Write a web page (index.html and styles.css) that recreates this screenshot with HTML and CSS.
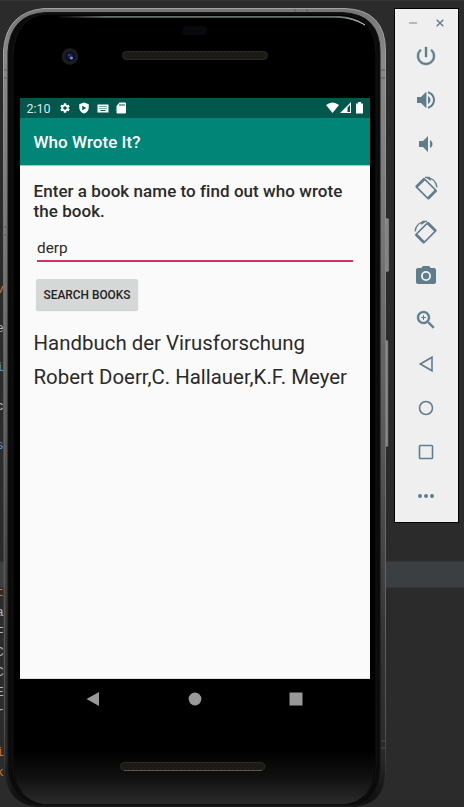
FILE: index.html
```html
<!DOCTYPE html>
<html lang="en">
<head>
<meta charset="utf-8">
<title>Who Wrote It?</title>
<link rel="stylesheet" href="styles.css">
</head>
<body>
<div class="desktop">
  <div class="band"></div>
  <pre class="code code-top"><b>v</b>
e
<i>i</i>
c
<i>s</i></pre>
  <pre class="code code-bottom"><b>t</b>
a
F
C
C
E
r

<b>i</b>
<b>k</b></pre>
  <main class="phone">
    <svg class="shell" width="388" height="807" viewBox="4 0 388 807">
      <defs>
        <linearGradient id="rim" x1="0" y1="0" x2="0" y2="1">
          <stop offset="0" stop-color="#777"/><stop offset=".06" stop-color="#888"/><stop offset=".3" stop-color="#747474"/>
          <stop offset=".56" stop-color="#565656"/><stop offset=".8" stop-color="#333"/><stop offset=".94" stop-color="#282828"/><stop offset="1" stop-color="#0c0c0c"/>
        </linearGradient>
        <linearGradient id="edge" x1="0" y1="0" x2="0" y2="1">
          <stop offset="0" stop-color="#a4a4a4"/><stop offset=".5" stop-color="#777"/><stop offset=".9" stop-color="#555"/><stop offset="1" stop-color="#181818"/>
        </linearGradient>
        <linearGradient id="key"><stop offset="0" stop-color="#555"/><stop offset=".55" stop-color="#8b8b8b"/><stop offset="1" stop-color="#666"/></linearGradient>
        <linearGradient id="chin" x1="0" y1="0" x2="0" y2="1">
          <stop offset="0" stop-color="#000"/><stop offset=".5" stop-color="#101010"/><stop offset="1" stop-color="#2b2b2b"/>
        </linearGradient>
        <linearGradient id="shine"><stop offset="0" stop-color="#000"/><stop offset=".16" stop-color="#69716e"/><stop offset=".9" stop-color="#69716e"/><stop offset="1" stop-color="#bac4c0"/></linearGradient>
        <pattern id="mesh" width="4" height="4" patternUnits="userSpaceOnUse"><rect width="4" height="4" fill="#191814"/><circle cx="1" cy="1" r=".8" fill="#24221e"/><circle cx="3" cy="3" r=".8" fill="#24221e"/></pattern>
      </defs>
      <rect x="384" y="218" width="5.500" height="54" rx="1.500" fill="url(#key)" stroke="#181818" stroke-width=".5"/>
      <rect x="384" y="340" width="4.700" height="107" rx="1.500" fill="url(#key)" stroke="#181818" stroke-width=".5"/>
      <path d="M44 8.500H345Q385.500 10 385.500 51V774Q384 806 351 806.500H37Q7 804 4.500 772L3.500 51Q6 12 44 8.500Z" fill="url(#rim)" stroke="url(#edge)"/>
      <path d="M46 12.500H342Q380 14 380 52V770Q378 805 349 805.500H40Q11 801 8 770V52Q10 14 46 12.500Z" fill="#0b0b0b" stroke="#151515"/>
      <path d="M48 14H340Q376 16 376 54V766Q374 801 344 804H44Q16 800 13 766V54Q16 15 48 14Z" fill="#000" stroke="#141414"/>
      <path d="M14 750H375V766Q373 801 344 804H44Q16 800 14 766Z" fill="url(#chin)"/>
      <path d="M56 16.500H338Q354 17 365 25Q353 18 338 17.300H56Z" fill="url(#shine)" stroke="url(#shine)" stroke-width=".9"/>
      <path d="M4 70h4M4 78h4M381 70h4.500M381 78h4.500M4 227h4M4 235h4M381 741h4.500M381 748h4.500M295 9v3M307 9v3" stroke="#555" stroke-width=".8"/>
      <rect x="182" y="26" width="25" height="9" rx="4.500" fill="#08090d"/>
      <circle cx="70" cy="56.500" r="8.300" fill="#1d1d1f"/><circle cx="70" cy="56.500" r="5" fill="#0b0d1c"/>
      <circle cx="70" cy="56" r="2.800" fill="#182452"/><circle cx="71.400" cy="58" r="1.600" fill="#7187d8"/><circle cx="69" cy="55" r="1" fill="#33489c"/>
      <rect x="122.500" y="51.500" width="145" height="8" rx="4" fill="url(#mesh)" stroke="#2c2a27"/>
      <rect x="120.500" y="762.500" width="144.500" height="8" rx="4" fill="url(#mesh)" stroke="#2c2a27"/>
      <path d="M124 770.500H262" stroke="#595750"/>
    </svg>
    <div class="screen">
      <div class="status">
        <span class="time">2:10</span>
        <svg class="st gear" viewBox="0 0 24 24"><path d="M19.140 12.940c.040-.300.060-.610.060-.940s-.020-.640-.070-.940l2.030-1.580c.180-.140.230-.410.120-.610l-1.920-3.320c-.120-.220-.370-.290-.590-.220l-2.390.960c-.500-.380-1.030-.700-1.620-.940L14.400 2.810c-.040-.240-.240-.410-.480-.410h-3.840c-.240 0-.430.170-.470.410L9.250 5.350C8.660 5.590 8.120 5.920 7.630 6.290L5.240 5.330c-.220-.080-.470 0-.590.220L2.740 8.870c-.120.210-.080.470.120.610l2.030 1.580c-.050.300-.090.630-.090.940s.020.640.070.940l-2.030 1.580c-.180.140-.230.410-.120.610l1.920 3.320c.120.220.370.290.590.220l2.390-.960c.500.380 1.030.700 1.620.940l.360 2.540c.050.240.240.410.480.410h3.840c.240 0 .440-.170.470-.410l.360-2.540c.590-.240 1.130-.560 1.620-.940l2.390.960c.220.080.470 0 .590-.220l1.920-3.320c.120-.220.070-.470-.120-.610L19.140 12.940zM12 15.600a3.600 3.600 0 1 1 0-7.200 3.600 3.600 0 0 1 0 7.200z"/></svg>
        <svg class="st" viewBox="0 0 24 24"><path fill-rule="evenodd" d="M12 1 2.500 4.500V11c0 5.500 3.800 10.500 9.500 12 5.700-1.500 9.500-6.500 9.500-12V4.500ZM8.500 7.500 16.500 12l-8 4.500Z"/></svg>
        <svg class="st kb" viewBox="0 0 24 18"><path fill-rule="evenodd" d="M1 1h22v16H1ZM5 4v2h2V4Zm4 0v2h2V4Zm4 0v2h2V4Zm4 0v2h2V4ZM5 8v2h2V8Zm4 0v2h2V8Zm4 0v2h2V8Zm4 0v2h2V8ZM7 12v2h10v-2Z"/></svg>
        <svg class="st card" viewBox="0 0 24 24"><path fill-rule="evenodd" d="M9 1h11q2 0 2 2v18q0 2-2 2H5q-2 0-2-2V8ZM9 4v4h2V4Zm4 0v4h2V4Zm4 0v4h2V4Z"/></svg>
        <svg class="signals" width="38" height="12" viewBox="0 0 38 12"><path d="M0 3Q6.500-2 13 3L6.500 11Z"/><path fill-rule="evenodd" d="M14 11 25 0V11ZM21.500 5.500V10H24V3Z"/><path d="M30 1.500h2V0h3v1.500h2V11.500h-7Z"/></svg>
      </div>
      <header class="appbar"><h1>Who Wrote It?</h1></header>
      <section class="content">
        <p class="prompt">Enter a book name to find out who wrote<br>the book.</p>
        <div class="field">derp</div>
        <button class="search">SEARCH BOOKS</button>
        <p class="result title">Handbuch der Virusforschung</p>
        <p class="result author">Robert Doerr,C. Hallauer,K.F. Meyer</p>
      </section>
      <nav class="nav">
        <svg width="14" height="14"><path d="M.500 7 13 0V14Z"/></svg>
        <svg width="14" height="14"><circle cx="7" cy="7" r="6.400"/></svg>
        <svg width="14" height="14"><rect x=".500" y=".500" width="13" height="13"/></svg>
      </nav>
    </div>
  </main>
  <aside class="tools">
    <div class="window">
      <svg width="8" height="8"><path d="M0 4H8" stroke="#a2b2ba" stroke-width="1.700"/></svg>
      <svg width="8" height="8"><path d="M.700.700 7.300 7.300M7.300.700.700 7.300" stroke="#607d8b" stroke-width="1.400"/></svg>
    </div>
    <svg viewBox="0 0 24 24"><path stroke="#607d8b" stroke-width=".4" d="M13 3h-2v10h2V3zm4.830 2.170l-1.420 1.420C17.990 7.860 19 9.810 19 12c0 3.870-3.130 7-7 7s-7-3.130-7-7c0-2.190 1.010-4.140 2.580-5.420L6.170 5.170C4.230 6.820 3 9.260 3 12c0 4.970 4.030 9 9 9s9-4.030 9-9c0-2.740-1.230-5.180-3.170-6.830z"/></svg>
    <svg viewBox="0 0 24 24"><path d="M3 9v6h4l5 5V4L7 9H3zm13.500 3c0-1.770-1.020-3.290-2.500-4.030v8.050c1.480-.730 2.500-2.250 2.500-4.020zM14 3.230v2.060c2.890.860 5 3.540 5 6.710s-2.110 5.850-5 6.710v2.060c4.010-.910 7-4.490 7-8.770s-2.990-7.860-7-8.770z"/><path d="M12 4v16h1V4Z" opacity=".4"/></svg>
    <svg viewBox="0 0 24 24"><path d="M18.500 12c0-1.770-1.020-3.290-2.500-4.030v8.050c1.480-.730 2.500-2.250 2.500-4.020zM5 9v6h4l5 5V4L9 9H5z"/></svg>
    <svg viewBox="0 0 24 24"><g id="rotate"><path fill-rule="evenodd" transform="translate(12.200 12.700) rotate(45)" d="M-8.300-6.500H8.300Q9.600-6.500 9.600-5.200V5.200Q9.600 6.500 8.300 6.500H-8.300Q-9.600 6.500-9.600 5.200V-5.200Q-9.600-6.500-8.300-6.500ZM-6.800-4.900V4.900H6.800V-4.900Z"/><path d="M11 1.300Q21.500 1.300 23 11.300" fill="none" stroke="#607d8b" stroke-width="1.300"/><path d="M11.300.700H15.500L17.500 4.600 15.500 4.300Z"/></g></svg>
    <svg viewBox="0 0 24 24"><use href="#rotate" transform="matrix(-1 0 0 1 24 0)"/></svg>
    <svg viewBox="0 0 24 24"><path fill-rule="evenodd" d="M9 2 7.200 4H4c-1.100 0-2 .900-2 2v12c0 1.100.900 2 2 2h16c1.100 0 2-.900 2-2V6c0-1.100-.900-2-2-2h-3.200L15 2H9zm3 15a5 5 0 1 1 0-10 5 5 0 0 1 0 10z"/><circle cx="12" cy="12" r="3.200"/></svg>
    <svg viewBox="0 0 24 24"><path stroke="#607d8b" stroke-width=".3" d="M15.500 14h-.790l-.280-.270C15.410 12.590 16 11.110 16 9.500 16 5.910 13.090 3 9.500 3S3 5.910 3 9.500 5.910 16 9.500 16c1.610 0 3.090-.590 4.230-1.570l.270.280v.790l5 4.990L20.490 19l-4.990-5zm-6 0C7.010 14 5 11.990 5 9.500S7.010 5 9.500 5 14 7.010 14 9.500 11.990 14 9.500 14z"/><path d="M12 10h-2v2H9v-2H7V9h2V7h1v2h2v1z"/></svg>
    <svg class="line" viewBox="0 0 24 24"><path d="M6.300 12 18 5.200V18.800Z"/></svg>
    <svg class="line" viewBox="0 0 24 24"><circle cx="12" cy="12" r="6.500"/></svg>
    <svg class="line" viewBox="0 0 24 24"><rect x="5.500" y="5.500" width="13" height="13" rx=".8"/></svg>
    <svg viewBox="0 0 24 24"><circle cx="6" cy="12" r="2"/><circle cx="12" cy="12" r="2"/><circle cx="18" cy="12" r="2"/></svg>
  </aside>
</div>
</body>
</html>
```
FILE: styles.css
```css
* { box-sizing: border-box; }
body { margin: 0; background: #2b2b2b; font-family: Roboto, sans-serif; }
h1, p, pre { margin: 0; }
svg { display: block; }
.desktop { position: relative; width: 464px; height: 807px; overflow: hidden; display: flex; align-items: flex-start; background: #2b2b2b; border-top: 1px solid #353535; }
.band { position: absolute; top: 560px; left: 0; width: 100%; height: 27px; background: #3c3f41; border: solid #343638; border-width: 1px 0; }
.code { position: absolute; left: -4px; width: 10px; overflow: hidden; font: 13px "Liberation Mono", monospace; color: #a9b7c6; }
.code b { color: #cc7832; font-weight: normal; }
.code i { color: #5394c9; font-style: normal; }
.code-top { top: 269px; line-height: 39px; }
.code-bottom { top: 582px; line-height: 20px; }
.phone { position: relative; width: 382px; height: 807px; margin: -1px 0 0 4px; padding: 98px 16px 0; flex: none; }
.shell { position: absolute; left: 0; top: 0; overflow: visible; }
.screen { position: relative; width: 350px; background: #fafafa; color: #2a2a2a; }
.status { display: flex; align-items: center; height: 20px; padding: 0 6px 0 6.500px; background: #00574b; color: #dce8e6; fill: #fff; }
.time { width: 32.500px; font-size: 12.500px; line-height: 20px; padding-top: 1px; }
.st { width: 12px; height: 12px; margin-right: 7px; }
.kb { width: 12px; height: 9px; }
.card { margin-left: -1px; }
.signals { margin-left: auto; }
.appbar { height: 47px; background: #008577; }
.appbar h1 { padding-left: 13.500px; color: #fff; font-size: 17px; font-weight: 500; letter-spacing: .06px; line-height: 49px; white-space: nowrap; }
.content { height: 514px; padding: 15px 13.500px 0; border-top: 1px solid #b0c4c1; border-bottom: 1px solid #ddd; }
.prompt { font-size: 17px; font-weight: 500; letter-spacing: .05px; line-height: 20px; white-space: nowrap; }
.field { height: 27px; margin: 14px 3.500px 0; border-bottom: 2px solid #df2d67; font-size: 15.300px; line-height: 27px; padding-left: 0; }
.search { display: block; width: 102px; height: 31px; margin: 17px 0 0 2.500px; padding: 1px 0 0; border: 0; border-radius: 2px; background: #d6d7d7; box-shadow: 0 1px 1px #ccc; color: #222; font: 500 11.900px Roboto, sans-serif; white-space: nowrap; }
.result { font-size: 20.400px; line-height: 24px; white-space: nowrap; }
.title { margin-top: 21px; letter-spacing: .02px; }
.author { margin-top: 10px; }
.nav { display: flex; height: 41px; background: #000; fill: #999; padding: 13px 0 0 66px; gap: 87.500px; }
.tools { position: relative; display: flex; flex-direction: column; align-items: center; gap: 20px; width: 65px; height: 515px; margin: 7px 0 0 8px; padding-right: 1.500px; border: 1px solid #000; background: #efefef; fill: #607d8b; flex: none; }
.tools > svg { width: 24px; height: 24px; flex: none; overflow: visible; }
.window { display: flex; gap: 19px; height: 15px; padding-top: 10px; margin-left: 1px; }
.line { fill: none; stroke: #607d8b; stroke-width: 1.600; }
```
